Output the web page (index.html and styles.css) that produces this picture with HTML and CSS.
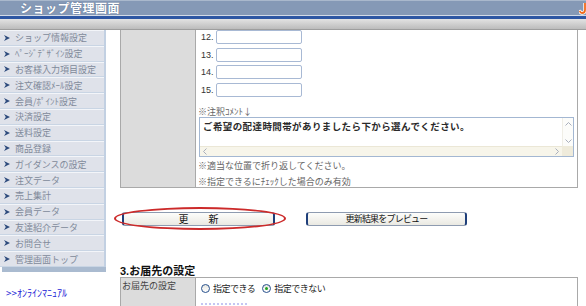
FILE: index.html
```html
<!DOCTYPE html>
<html lang="ja">
<head>
    <meta charset="UTF-8">
    <meta name="viewport" content="width=device-width, initial-scale=1.0">
    <title>ショップ管理画面</title>
    <link rel="stylesheet" href="styles.css">
</head>
<body>
    <header class="topbar">
        <div class="titlebar">
            <h1 class="title">ショップ管理画面</h1>
            <svg class="logo-mark" viewBox="0 0 8 12" width="8" height="12">
                <path d="M6 0 L6 7 Q6 10 3 10 Q1.5 10 1 8.5" fill="none" stroke="#fff" stroke-width="3.4" stroke-linecap="round"/>
                <path d="M6 0 L6 7 Q6 10 3 10 Q1.5 10 1 8.5" fill="none" stroke="#f06a1c" stroke-width="1.8" stroke-linecap="round"/>
            </svg>
        </div>
        <div class="blueline"></div>
        <div class="toolbar"></div>
    </header>

    <div class="layout">
        <nav class="sidebar">
            <ul class="menu">
                <li class="menu-item"><svg class="arrow" viewBox="0 0 6 6"><polygon points="0,0 6,3 0,6 1.8,3"/></svg>ショップ情報設定</li>
                <li class="menu-item"><svg class="arrow" viewBox="0 0 6 6"><polygon points="0,0 6,3 0,6 1.8,3"/></svg>ﾍﾟｰｼﾞﾃﾞｻﾞｲﾝ設定</li>
                <li class="menu-item"><svg class="arrow" viewBox="0 0 6 6"><polygon points="0,0 6,3 0,6 1.8,3"/></svg>お客様入力項目設定</li>
                <li class="menu-item"><svg class="arrow" viewBox="0 0 6 6"><polygon points="0,0 6,3 0,6 1.8,3"/></svg>注文確認ﾒｰﾙ設定</li>
                <li class="menu-item"><svg class="arrow" viewBox="0 0 6 6"><polygon points="0,0 6,3 0,6 1.8,3"/></svg>会員/ﾎﾟｲﾝﾄ設定</li>
                <li class="menu-item"><svg class="arrow" viewBox="0 0 6 6"><polygon points="0,0 6,3 0,6 1.8,3"/></svg>決済設定</li>
                <li class="menu-item"><svg class="arrow" viewBox="0 0 6 6"><polygon points="0,0 6,3 0,6 1.8,3"/></svg>送料設定</li>
                <li class="menu-item"><svg class="arrow" viewBox="0 0 6 6"><polygon points="0,0 6,3 0,6 1.8,3"/></svg>商品登録</li>
                <li class="menu-item"><svg class="arrow" viewBox="0 0 6 6"><polygon points="0,0 6,3 0,6 1.8,3"/></svg>ガイダンスの設定</li>
                <li class="menu-item"><svg class="arrow" viewBox="0 0 6 6"><polygon points="0,0 6,3 0,6 1.8,3"/></svg>注文データ</li>
                <li class="menu-item"><svg class="arrow" viewBox="0 0 6 6"><polygon points="0,0 6,3 0,6 1.8,3"/></svg>売上集計</li>
                <li class="menu-item"><svg class="arrow" viewBox="0 0 6 6"><polygon points="0,0 6,3 0,6 1.8,3"/></svg>会員データ</li>
                <li class="menu-item"><svg class="arrow" viewBox="0 0 6 6"><polygon points="0,0 6,3 0,6 1.8,3"/></svg>友達紹介データ</li>
                <li class="menu-item"><svg class="arrow" viewBox="0 0 6 6"><polygon points="0,0 6,3 0,6 1.8,3"/></svg>お問合せ</li>
                <li class="menu-item"><svg class="arrow" viewBox="0 0 6 6"><polygon points="0,0 6,3 0,6 1.8,3"/></svg>管理画面トップ</li>
            </ul>
            <div class="menu-foot"></div>
            <a class="manual-link" href="#">&gt;&gt;ｵﾝﾗｲﾝﾏﾆｭｱﾙ</a>
        </nav>

        <main class="main">
            <div class="form-table cut-top">
                <div class="label-cell"></div>
                <div class="value-cell">
                    <div class="num-row"><span class="num">12.</span><input class="text-input" type="text"></div>
                    <div class="num-row"><span class="num">13.</span><input class="text-input" type="text"></div>
                    <div class="num-row"><span class="num">14.</span><input class="text-input" type="text"></div>
                    <div class="num-row"><span class="num">15.</span><input class="text-input" type="text"></div>

                    <div class="note-label">※注釈ｺﾒﾝﾄ↓</div>
                    <div class="note-box">
                        <div class="note-text">ご希望の配達時間帯がありましたら下から選んでください。</div>
                        <div class="vscroll">
                            <svg width="7" height="4" viewBox="0 0 7 4"><polyline points="0.5,3.5 3.5,0.5 6.5,3.5" fill="none" stroke="#a9afbd"/></svg>
                            <svg width="7" height="4" viewBox="0 0 7 4"><polyline points="0.5,0.5 3.5,3.5 6.5,0.5" fill="none" stroke="#a9afbd"/></svg>
                        </div>
                        <div class="hscroll">
                            <svg width="4" height="7" viewBox="0 0 4 7"><polyline points="3.5,0.5 0.5,3.5 3.5,6.5" fill="none" stroke="#a9afbd"/></svg>
                            <svg width="4" height="7" viewBox="0 0 4 7"><polyline points="0.5,0.5 3.5,3.5 0.5,6.5" fill="none" stroke="#a9afbd"/></svg>
                        </div>
                        <div class="corner"></div>
                    </div>
                    <div class="hint">※適当な位置で折り返してください。</div>
                    <div class="hint hint-last">※指定できるにﾁｪｯｸした場合のみ有効</div>
                </div>
            </div>

            <div class="button-row">
                <button class="btn btn-update" type="button">更　　新</button>
                <button class="btn btn-preview" type="button">更新結果をプレビュー</button>
                <span class="circle-mark"></span>
            </div>

            <h2 class="section-title">3.お届先の設定</h2>
            <div class="form-table">
                <div class="label-cell label-text">お届先の設定</div>
                <div class="value-cell">
                    <div class="radio-row">
                        <span class="radio"></span><span class="radio-label">指定できる</span>
                        <span class="radio on"></span><span class="radio-label">指定できない</span>
                    </div>
                    <div class="more-mark"></div>
                </div>
            </div>
        </main>
    </div>
</body>
</html>
```
FILE: styles.css
```css
* {
    box-sizing: border-box;
}

html, body {
    margin: 0;
    padding: 0;
}

body {
    width: 586px;
    height: 306px;
    overflow: hidden;
    background: #fff;
    font-family: "Liberation Sans", "Noto Sans CJK JP", sans-serif;
    font-size: 9px;
    color: #333;
}

/* header */
.titlebar {
    height: 15px;
    background: #8599b6;
    border-top: 1px solid #a9b8cc;
    display: flex;
    justify-content: space-between;
    padding-left: 20px;
    overflow: hidden;
}

.title {
    margin: 0;
    font-family: "Noto Sans CJK JP", sans-serif;
    font-size: 12px;
    font-weight: bold;
    line-height: 14px;
    letter-spacing: 0.5px;
    color: #fff;
    text-shadow: 0 0 1px #4f6280;
}

.logo-mark {
    align-self: flex-end;
    margin-right: -1px;
}

.blueline {
    height: 4px;
    border-top: 1px solid #d3dbe7;
    background: #2e57a3;
}

.toolbar {
    height: 11px;
    background: linear-gradient(#e3e3e3, #bcbcbc);
    border-bottom: 1px solid #9e9e9e;
}

.layout {
    display: flex;
    height: 276px;
}

/* side menu */
.sidebar {
    width: 106px;
    flex: none;
}

.menu {
    list-style: none;
    margin: 0;
    padding: 0;
    border-right: 2px solid #c2d0e2;
}

.menu-item {
    height: 15.8px;
    display: flex;
    align-items: center;
    gap: 5px;
    padding-left: 4px;
    background: #dfe2ea;
    border-top: 1px solid #f3f5f9;
    border-bottom: 1px solid #c9d5e4;
    font-family: "Noto Sans CJK JP", sans-serif;
    font-size: 9px;
    color: #818a9a;
    white-space: nowrap;
}

.arrow {
    width: 6px;
    height: 6px;
    flex: none;
    fill: #2d4a7c;
}

.menu-foot {
    height: 5px;
    margin-left: 2px;
    background: #aabbd0;
}

.manual-link {
    display: block;
    margin: 15px 0 0 6px;
    font-family: "Noto Sans CJK JP", sans-serif;
    font-size: 10px;
    line-height: 12px;
    color: #2323d6;
    text-decoration: none;
}

/* main */
.main {
    flex: 1;
    padding: 0 9px 0 14px;
}

.form-table {
    display: grid;
    grid-template-columns: 75px 1fr;
    border: 1px solid #a9a9a9;
}

.form-table.cut-top {
    border-top: none;
}

.label-cell {
    background: #dcdcdc;
    border-right: 1px solid #a9a9a9;
}

.label-text {
    padding: 2px 0 0 1px;
    font-family: "Noto Sans CJK JP", sans-serif;
    line-height: 11px;
    color: #444;
}

.value-cell {
    padding: 0 3px;
    font-family: "Noto Sans CJK JP", sans-serif;
}

.num-row {
    display: flex;
    align-items: center;
    height: 14px;
    margin-bottom: 3.6px;
    padding-left: 2px;
}

.num {
    width: 15px;
    font-family: "Liberation Sans", sans-serif;
    color: #333;
}

.text-input {
    width: 86px;
    height: 14px;
    margin: 0;
    padding: 0;
    border: 1px solid #a8b9d4;
    border-radius: 2px;
    background: #fff;
}

.note-label {
    margin: 9px 0 0 -1px;
    line-height: 11px;
    color: #666;
}

.note-box {
    width: 375px;
    height: 40px;
    border: 1px solid #a3b7d2;
    display: grid;
    grid-template-columns: 1fr 11px;
    grid-template-rows: 1fr 10px;
    background: #fff;
}

.note-text {
    padding: 2px 0 0 3px;
    font-size: 9.5px;
    font-weight: bold;
    line-height: 12px;
    letter-spacing: 0.4px;
    color: #2a2a2a;
    white-space: nowrap;
    overflow: hidden;
}

.vscroll {
    display: flex;
    flex-direction: column;
    justify-content: space-between;
    align-items: center;
    padding: 4px 0 3px;
    background: #fcfcfa;
    border-left: 1px solid #f0eee6;
}

.hscroll {
    display: flex;
    justify-content: space-between;
    align-items: center;
    padding: 0 3px;
    background: #f7f5ea;
    border-top: 1px solid #ebe7d6;
}

.corner {
    background: #efebdb;
}

.hint {
    margin: 3px 0 0 -1px;
    line-height: 11px;
    color: #666;
}

.hint-last {
    margin-top: 5px;
}

/* buttons */
.button-row {
    position: relative;
    display: flex;
    margin-top: 24px;
}

.btn {
    height: 14px;
    padding: 0;
    font-family: "Noto Sans CJK JP", sans-serif;
    font-size: 10px;
    line-height: 11px;
    color: #111;
    background: linear-gradient(#fdfdfb, #eae9e2);
    border: 1px solid #8e9bb0;
    border-left: 2px solid #1f3f7a;
    border-right: 2px solid #1f3f7a;
    border-radius: 3px;
}

.btn-update {
    width: 153px;
    margin-left: 2px;
}

.btn-preview {
    width: 161px;
    margin-left: 31px;
    font-size: 9px;
    letter-spacing: -0.8px;
}

.circle-mark {
    position: absolute;
    left: -6px;
    top: -5px;
    width: 172px;
    height: 23px;
    border: 2px solid #cc2a2a;
    border-radius: 50%;
}

.section-title {
    margin: 39px 0 0;
    font-family: "Liberation Sans", "Noto Sans CJK JP", sans-serif;
    font-size: 11px;
    font-weight: bold;
    line-height: 12px;
    color: #111;
}

.radio-row {
    display: flex;
    align-items: center;
    height: 11px;
    margin-top: 5.5px;
    padding-left: 2px;
    color: #222;
}

.radio {
    position: relative;
    width: 9px;
    height: 9px;
    flex: none;
    border: 1px solid #27508c;
    border-radius: 50%;
    background: linear-gradient(#e6e6e0, #fff);
}

.radio.on::after {
    content: "";
    position: absolute;
    left: 2px;
    top: 2px;
    width: 3px;
    height: 3px;
    border-radius: 50%;
    background: #21a121;
}

.radio-label {
    margin: 0 7px 0 3px;
    letter-spacing: -0.5px;
}

.more-mark {
    width: 46px;
    height: 4px;
    margin: 9px 0 0 2px;
    border-top: 2px dotted #c4c6f2;
}
```
